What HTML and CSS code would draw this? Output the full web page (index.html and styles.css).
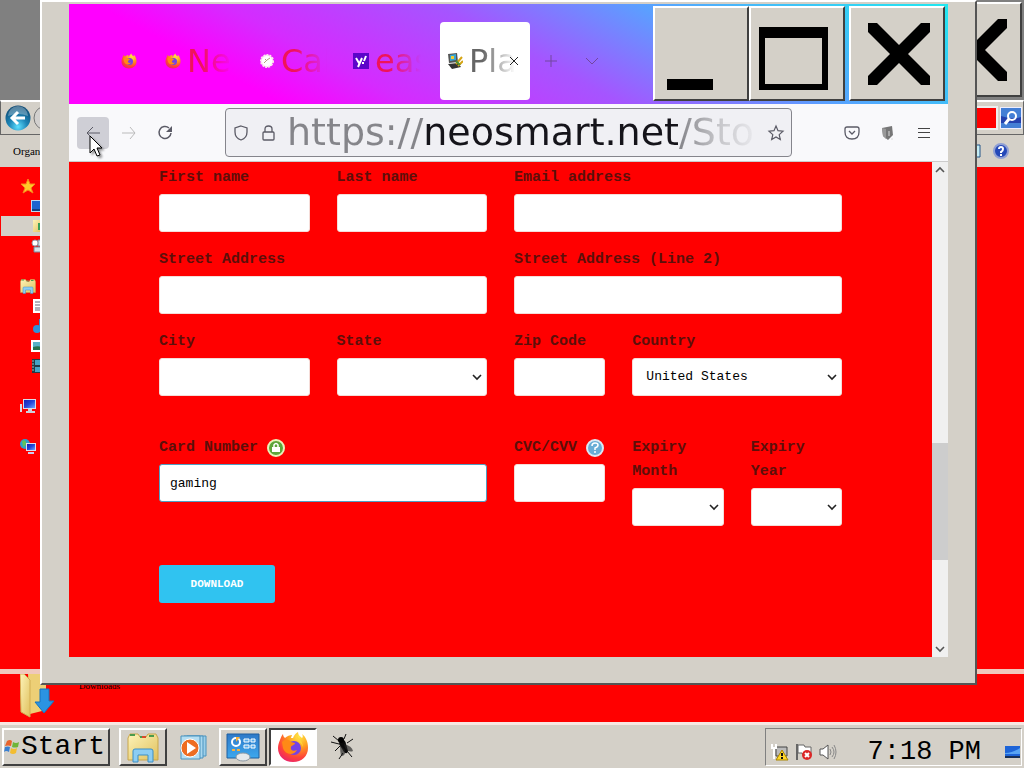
FILE: index.html
```html
<!DOCTYPE html>
<html lang="en">
<head>
<meta charset="utf-8">
<title>Desktop</title>
<link rel="stylesheet" href="styles.css">
</head>
<body>
<svg class="defs" aria-hidden="true">
  <defs>
    <radialGradient id="fireball" cx=".7" cy=".15" r="1"><stop offset="0" stop-color="#ffe94a"/><stop offset=".35" stop-color="#ffa11f"/><stop offset=".7" stop-color="#ff4438"/><stop offset="1" stop-color="#e3197c"/></radialGradient>
    <radialGradient id="orb" cx=".5" cy=".85" r=".9"><stop offset="0" stop-color="#5fe0ff"/><stop offset=".4" stop-color="#1d86b8"/><stop offset="1" stop-color="#0c3f66"/></radialGradient>
    <linearGradient id="paper" x1="0" y1="0" x2="1" y2="1"><stop offset="0" stop-color="#fdf3b8"/><stop offset="1" stop-color="#e0c15e"/></linearGradient>
    <linearGradient id="screen" x1="0" y1="0" x2="1" y2="1"><stop offset="0" stop-color="#1a1fb0"/><stop offset=".5" stop-color="#2446d8"/><stop offset="1" stop-color="#6fa4ff"/></linearGradient>
    <linearGradient id="sky" x1="0" y1="0" x2="0" y2="1"><stop offset="0" stop-color="#2f79c8"/><stop offset="1" stop-color="#3da8ee"/></linearGradient>
    <symbol id="firefox" viewBox="0 0 32 32">
      <path fill="url(#fireball)" d="M3 9c1-3 2-5 3-6 0 2 1 3 2 4 2-2 5-3 7-3 0 1-1 2-1 3h2c1-3 3-5 5-6 0 3 2 4 4 6 1-1 1-2 0-4 4 3 6 8 6 14 0 8-6 14-15 14S1 25 1 17c0-3 1-6 2-8z"/>
      <circle cx="17" cy="17" r="7" fill="#7542e5"/>
      <path fill="#ff8a16" d="M5 11c3-3 7-3 9 0l4 1c0 2-3 2-4 4-1 3 2 5 6 3-3 6-12 5-14-2z"/>
      <path fill="#ffd43b" d="M20 4c1 4 6 6 6 12-1-3-3-5-5-6 0-2-2-3-1-6z"/>
    </symbol>
    <symbol id="cross" viewBox="0 0 62 62"><path d="M0 0h9l22 22L53 0h9v9L40 31l22 22v9h-9L31 40 9 62H0v-9l22-22L0 9z"/></symbol>
    <symbol id="down" viewBox="0 0 10 10"><path d="M1 3l4 4 4-4" fill="none" stroke="#222" stroke-width="1.600"/></symbol>
    <symbol id="library" viewBox="0 0 32 32">
      <path d="M1 7l2-4h8l2 3h6l2-3h8l2 4v22H1z" fill="url(#paper)" stroke="#c9a64a"/>
      <path d="M3 4h5M13 6h5M22 5h5" stroke="#4a9b4d" stroke-width="2"/><path d="M15 6h4" stroke="#d84b2b" stroke-width="2"/>
      <path d="M6 31V20q0-2 2-2h16q2 0 2 2v11h-5v-7H11v7z" fill="#8ccdf2" stroke="#3d8fc5"/>
    </symbol>
    <symbol id="monitor" viewBox="0 0 16 16"><path d="M3 1h13v10H3z" fill="#d9dce8"/><path d="M4 2h11v8H4z" fill="url(#screen)"/><path d="M8 11h4v2h3v2H6v-2h2z" fill="#cdd2dc"/></symbol>
  </defs>
</svg>

<div class="desktop">
  <section class="explorer" aria-label="Explorer">
    <header class="explorer-title">
      <button class="caption-btn" aria-label="Close folder"><svg class="cross"><use href="#cross"/></svg></button>
    </header>
    <div class="explorer-nav">
      <button class="orb-btn" aria-label="Back"><svg width="26" height="26" viewBox="0 0 26 26"><circle cx="13" cy="13" r="12.500" fill="url(#orb)"/><path d="M3 11a10 10 0 0 1 20 0q-10-4-20 0z" fill="#fff" opacity=".3"/><path d="M20 13H7m6-6l-6 6 6 6" fill="none" stroke="#fff" stroke-width="3"/></svg></button>
      <button class="orb-btn" aria-label="Forward"><svg width="26" height="26" viewBox="0 0 26 26"><circle cx="13" cy="13" r="12" fill="#d2d0ce" stroke="#777"/></svg></button>
      <input class="explorer-search" type="text" aria-label="Search folder">
      <button class="search-btn" aria-label="Search"><svg width="20" height="20" viewBox="0 0 20 20"><path fill="#447fd5" d="M0 0h20v20H0z"/><path fill="#2440ad" d="M0 8q12 4 20 1v6H0z"/><circle cx="11" cy="8" r="4" fill="none" stroke="#fff" stroke-width="2"/><path d="M8 11l-4 5" stroke="#fff" stroke-width="3"/></svg></button>
    </div>
    <div class="explorer-tools">
      <button class="plain organize">Organize</button>
      <span class="tool-end">
        <svg width="14" height="14" viewBox="0 0 14 14"><path d="M1 1h12v12H1z" fill="#c5edf4" stroke="#258"/></svg>
        <svg width="16" height="16" viewBox="0 0 16 16"><circle cx="8" cy="8" r="7" fill="#2448b8" stroke="#8f9fd4" stroke-width="2"/><path d="M6 6q0-2 2-2t2 2-2 3v1m0 1v2" fill="none" stroke="#fff" stroke-width="2"/></svg>
      </span>
    </div>
    <div class="explorer-body">
      <ul class="tree">
        <li class="root"><svg width="16" height="16" viewBox="0 0 16 16"><path d="M8 1l2 5h5l-4 4 2 5-5-3-5 3 2-5-4-4h5z" fill="#ffc928" stroke="#f7861b"/></svg></li>
        <li><svg width="16" height="16" viewBox="0 0 16 16"><path d="M0 2h16v12H0z" fill="#bcd8f2"/><path d="M1 3h14v8H1z" fill="#1d64cf"/><path d="M1 11h14v2H1z" fill="#124080"/></svg></li>
        <li class="picked"><svg width="16" height="16" viewBox="0 0 16 16"><path d="M2 2h9v12H2z" fill="url(#paper)"/><path d="M7 5h8v7H7z" fill="#38a05a"/></svg></li>
        <li><svg width="16" height="16" viewBox="0 0 16 16"><path d="M7 2h9v6H7zM3 9h12v5H3z" fill="#d5e1e8" stroke="#789"/><circle cx="4" cy="5" r="3" fill="#fff" stroke="#99a"/></svg></li>
      </ul>
      <ul class="tree">
        <li class="root"><svg width="16" height="16"><use href="#library"/></svg></li>
        <li><svg width="16" height="16" viewBox="0 0 16 16"><path d="M2 1h13v14H2z" fill="#fff"/><path d="M4 4h8M4 7h8M4 10h8M4 12h8" stroke="#667"/></svg></li>
        <li><svg width="16" height="16" viewBox="0 0 16 16"><circle cx="6" cy="11" r="4" fill="#2d91d8"/><path d="M9 11V1" stroke="#2d91d8" stroke-width="2"/></svg></li>
        <li><svg width="16" height="16" viewBox="0 0 16 16"><path d="M0 2h16v12H0z" fill="#fff"/><path d="M2 4h12v8H2z" fill="#59b3c7"/><path d="M2 9q6-2 12 1v2H2z" fill="#26734d"/></svg></li>
        <li><svg width="16" height="16" viewBox="0 0 16 16"><path d="M1 1h15v14H1z" fill="#223a46"/><path d="M4 2h11v5H4zM4 9h11v5H4z" fill="#43a3c7"/><path d="M2 2v12" stroke="#9bb" stroke-dasharray="2 1"/></svg></li>
      </ul>
      <ul class="tree"><li class="root"><svg width="16" height="16"><use href="#monitor"/><path d="M1 6v8" stroke="#d9dce8" stroke-width="2"/></svg></li></ul>
      <ul class="tree"><li class="root"><svg width="16" height="16" viewBox="0 0 16 16"><circle cx="5" cy="6" r="5" fill="#2b9fd0"/><path d="M2 3q3-2 4 1T3 9z" fill="#63c25a"/><path d="M6 5h10v8H6z" fill="#dde"/><path d="M7 6h8v6H7z" fill="url(#screen)"/><path d="M8 15h6" stroke="#cce" stroke-width="2"/></svg></li></ul>
    </div>
    <footer class="details">
      <svg width="36" height="44" viewBox="0 0 36 44"><path d="M8 0h18v36l-16 4z" fill="#edcf76"/><path d="M0 0h4l6 6v37L1 38z" fill="url(#paper)" stroke="#d2ae52"/><path d="M20 15h9v12h5L24 39 15 28h5z" fill="#2b93e2" stroke="#1673bd"/></svg>
      <span>Downloads</span>
    </footer>
  </section>

  <main class="browser">
    <header class="titlebar">
      <nav class="tabs" aria-label="Tabs">
        <button class="tab pinned" aria-label="Pinned tab"><svg width="16" height="16"><use href="#firefox"/></svg></button>
        <button class="tab"><svg width="16" height="16"><use href="#firefox"/></svg><span class="tab-name">Ne</span></button>
        <button class="tab"><svg width="16" height="16" viewBox="0 0 16 16"><circle cx="8" cy="8" r="6" fill="#fff" stroke="#fce4ec" stroke-width="2" stroke-dasharray="2 1"/><path d="M5 10l3-3 3-2M6 6l2 2" fill="none" stroke="#b2a27d"/></svg><span class="tab-name">Cal</span></button>
        <button class="tab"><svg width="16" height="16" viewBox="0 0 16 16"><path d="M0 0h16v16H0z" fill="#5b05c9"/><path d="M3 5l3 5M9 5l-4 9" stroke="#fff" stroke-width="2"/><path d="M13 3l-2 5m-1 1v2" stroke="#fff" stroke-width="2"/></svg><span class="tab-name">eas</span></button>
        <button class="tab active"><svg width="16" height="16" viewBox="0 0 16 16"><path d="M1 1l9-1 1 9-9 1z" fill="#555"/><path d="M3 2l6-1v6L3 8z" fill="#35a5d5"/><path d="M4 3h3v3H4z" fill="#f3cb35"/><path d="M1 11l10-1 3 4-9 2z" fill="#333"/><path d="M9 11l6-7M11 13l5-5" stroke="#d6a514" stroke-width="2"/><path d="M9 8l4 4" stroke="#4a8f35" stroke-width="2"/></svg><span class="tab-name">Pla</span>
          <svg class="tab-close" width="10" height="10" viewBox="0 0 10 10"><path d="M1 1l8 8M9 1L1 9" stroke="#222"/></svg></button>
      </nav>
      <button class="tab-tool" aria-label="New tab"><svg width="14" height="14" viewBox="0 0 14 14"><path d="M7 1v12M1 7h12" stroke="#73469f"/></svg></button>
      <button class="tab-tool" aria-label="List all tabs"><svg width="14" height="14" viewBox="0 0 14 14"><path d="M1 4l6 6 6-6" fill="none" stroke="#73469f"/></svg></button>
      <div class="captions">
        <button class="caption-btn" aria-label="Minimize"><svg width="76" height="74"><path d="M4 62h46v11H4z"/></svg></button>
        <button class="caption-btn" aria-label="Maximize"><svg width="76" height="74"><path fill-rule="evenodd" d="M0 10h69v63H0zM6 21v46h57V21z"/></svg></button>
        <button class="caption-btn last" aria-label="Close"><svg class="cross"><use href="#cross"/></svg></button>
      </div>
    </header>
    <div class="toolbar">
      <div class="tools">
        <button class="tool pressed" aria-label="Go back"><svg width="16" height="16" viewBox="0 0 16 16"><path d="M15 8H2m6-6L2 8l6 6" fill="none" stroke="#5b5b66"/></svg>
          <svg class="pointer" width="14" height="22" viewBox="0 0 14 22"><path d="M1 1v17l4-4 3 7 3-1-3-7h5z" fill="#fff" stroke="#000"/></svg></button>
        <button class="tool" aria-label="Go forward"><svg width="16" height="16" viewBox="0 0 16 16"><path d="M1 8h13M9 2l5 6-5 6" fill="none" stroke="#bbb"/></svg></button>
        <button class="tool" aria-label="Reload"><svg width="16" height="16" viewBox="0 0 16 16"><path d="M12 3a6 6 0 1 0 2 5" fill="none" stroke="#5b5b66" stroke-width="1.500"/><path d="M15 1v6H9z" fill="#5b5b66"/></svg></button>
      </div>
      <div class="urlbar">
        <svg width="16" height="18" viewBox="0 0 16 18"><path d="M8 2l6 2v4c0 4-3 7-6 8-3-1-6-4-6-8V4z" fill="none" stroke="#5b5b66" stroke-width="1.300"/></svg>
        <svg width="16" height="18" viewBox="0 0 16 18"><rect x="3" y="8" width="11" height="8" rx="1" fill="none" stroke="#5b5b66" stroke-width="1.300"/><path d="M5 8V5q0-3 3.500-3T12 5v3" fill="none" stroke="#5b5b66" stroke-width="1.300"/></svg>
        <input class="url" type="text" aria-label="Address" value="https://neosmart.net/Sto">
        <button class="plain" aria-label="Bookmark"><svg width="18" height="18" viewBox="0 0 18 18"><path d="M9 2l2 4.700 5 .5-3.800 3.400 1.100 5L9 13l-4.300 2.600 1.100-5L2 7.200l5-.5z" fill="none" stroke="#5b5b66" stroke-width="1.200"/></svg></button>
      </div>
      <div class="tools">
        <button class="tool" aria-label="Save to Pocket"><svg width="16" height="16" viewBox="0 0 16 16"><path d="M3 2h10q2 0 2 2v3q0 7-7 7T1 7V4q0-2 2-2z" fill="none" stroke="#5b5b66" stroke-width="1.300"/><path d="M5 6l3 3 3-3" fill="none" stroke="#5b5b66" stroke-width="1.300"/></svg></button>
        <button class="tool" aria-label="Extension"><svg width="16" height="16" viewBox="0 0 16 16"><path d="M2 3l10-2 1 9-5 5-5-4z" fill="#777"/><path d="M2 3l4 1v10l-3-3z" fill="#999"/><path d="M9 6v5M11 14h2" stroke="#ddd"/></svg></button>
        <button class="tool" aria-label="Menu"><svg width="16" height="16" viewBox="0 0 16 16"><path d="M2 3.500h12M2 7.500h12M2 12.500h12" stroke="#444"/></svg></button>
      </div>
    </div>

    <div class="page">
      <form class="order">
        <div class="field w3"><label for="first">First name</label><input id="first" type="text"></div>
        <div class="field w3"><label for="last">Last name</label><input id="last" type="text"></div>
        <div class="field w6"><label for="email">Email address</label><input id="email" type="text"></div>
        <div class="field w6"><label for="street">Street Address</label><input id="street" type="text"></div>
        <div class="field w6"><label for="street2">Street Address (Line 2)</label><input id="street2" type="text"></div>
        <div class="field w3"><label for="city">City</label><input id="city" type="text"></div>
        <div class="field w3"><label for="state">State</label><div class="pick"><select id="state"><option></option></select><svg><use href="#down"/></svg></div></div>
        <div class="field w2"><label for="zip">Zip Code</label><input id="zip" type="text"></div>
        <div class="field w4"><label for="country">Country</label><div class="pick"><select id="country"><option>United States</option></select><svg><use href="#down"/></svg></div></div>
        <div class="field w6 pay"><label for="card">Card Number <svg width="18" height="18" viewBox="0 0 18 18"><circle cx="9" cy="9" r="8" fill="#5da53a" stroke="#e9f2b8" stroke-width="2"/><path d="M5 8h8v5H5z" fill="#fff"/><path d="M7 8V6q2-3 4 0v2" fill="none" stroke="#fff" stroke-width="1.500"/></svg></label><input id="card" class="focused" type="text" value="gaming"></div>
        <div class="field w2 pay"><label for="cvc">CVC/CVV <svg width="18" height="18" viewBox="0 0 18 18"><circle cx="9" cy="9" r="8" fill="#69add6" stroke="#dce9f3" stroke-width="2"/><path d="M6 7q0-3 3-3t3 2q0 2-3 3v2m0 1v2" fill="none" stroke="#fff" stroke-width="1.500"/></svg></label><input id="cvc" type="text"></div>
        <div class="field w2 pay"><label for="month">Expiry<br>Month</label><div class="pick"><select id="month"><option></option></select><svg><use href="#down"/></svg></div></div>
        <div class="field w2 pay"><label for="year">Expiry<br>Year</label><div class="pick"><select id="year"><option></option></select><svg><use href="#down"/></svg></div></div>
        <button class="download" type="button">DOWNLOAD</button>
      </form>
      <div class="scrollbar">
        <svg width="10" height="16" viewBox="0 0 10 16"><path d="M1 10l4-4 4 4" fill="none" stroke="#555" stroke-width="1.600"/></svg>
        <div class="track"><div class="thumb"></div></div>
        <svg width="10" height="16" viewBox="0 0 10 16"><path d="M1 6l4 4 4-4" fill="none" stroke="#555" stroke-width="1.600"/></svg>
      </div>
    </div>
  </main>
</div>

<footer class="taskbar">
  <button class="start"><svg width="16" height="16" viewBox="0 0 16 16"><path d="M3 2q3-2 5 0L7 7Q4 6 1 7z" fill="#e8632c"/><path d="M9 3q3 2 6 0l-1 5q-3 1-6 0z" fill="#6fb53a"/><path d="M1 8q3-1 5 0l-1 5q-3-2-5 0z" fill="#3a7fd0"/><path d="M7 9q3 2 6 0l-1 5q-3 2-6 0z" fill="#f3bd30"/></svg>Start</button>
  <div class="apps">
    <button class="app open" aria-label="Explorer"><svg width="34" height="32"><use href="#library"/></svg></button>
    <button class="app" aria-label="Media Player"><svg width="28" height="28" viewBox="0 0 28 28"><path d="M8 3h19v20H8z" fill="#9ccfe9" stroke="#4b93be"/><path d="M5 3h19v22H5z" fill="#a9d8ef" stroke="#4b93be"/><path d="M2 3h19v23H2z" fill="#b5def2" stroke="#4b93be"/><circle cx="11" cy="15" r="9" fill="#ee6d22" stroke="#fff"/><path d="M8 9l9 6-9 6z" fill="#fff"/></svg></button>
    <button class="app open" aria-label="Control Panel"><svg width="34" height="30" viewBox="0 0 34 30"><path d="M1 2h32v24H1z" fill="url(#sky)" stroke="#1f5e9f"/><circle cx="10" cy="10" r="4" fill="none" stroke="#fff" stroke-width="2"/><path d="M10 10V5h4z" fill="#f7b13c"/><path d="M18 7h5v3h-5zM25 7h4v3h-4zM18 13h5v3h-5zM25 13h4v3h-4z" fill="#54a8e8" stroke="#fff"/><path d="M6 18h8" stroke="#f7b13c" stroke-width="2" stroke-dasharray="3 2"/><ellipse cx="17" cy="25" rx="7" ry="4" fill="#e6e9ec" stroke="#8d99a3"/></svg></button>
    <button class="app current" aria-label="Firefox"><svg width="32" height="32"><use href="#firefox"/></svg></button>
    <button class="app" aria-label="Fly"><svg width="26" height="28" viewBox="0 0 26 28"><path d="M10 7q5-2 6 4l2 7q-1 4-4 1l-5-8z" fill="#080808"/><path d="M14 11q8 2 9 7-4 2-8-3zM10 12q0 7 1 11 5 0 4-6z" fill="#222" opacity=".65"/><path d="M9 8L3 3M9 11L1 9M10 13l-5 5M14 6l2-5M17 10l6-4M17 18l5 6M13 20l-4 6" fill="none" stroke="#111"/><circle cx="11" cy="7" r="3"/></svg></button>
  </div>
  <div class="tray">
    <div class="tray-icons">
      <svg width="18" height="18" viewBox="0 0 18 18"><path d="M5 4h11v9H5z" fill="#bbb" stroke="#444"/><path d="M1 1v4h4V1M3 5v11" fill="none" stroke="#fff" stroke-width="2"/><path d="M11 7l6 10H5z" fill="#ffd629" stroke="#a98500"/><path d="M11 10v3m0 1v2" stroke="#111" stroke-width="2"/></svg>
      <svg width="18" height="18" viewBox="0 0 18 18"><path d="M2 1v16" stroke="#666" stroke-width="2"/><path d="M3 2h6l1 2h6v8H8l-1-2H3z" fill="#fff" stroke="#666"/><circle cx="12" cy="12" r="5" fill="#dc2626"/><path d="M10 10l4 4m0-4l-4 4" stroke="#fff" stroke-width="2"/></svg>
      <svg width="18" height="18" viewBox="0 0 18 18"><path d="M1 6h3l5-4v14l-5-4H1z" fill="#fff" stroke="#555"/><path d="M11 6q2 3 0 6M13 4q4 5 0 10M15 2q4 7 0 14" fill="none" stroke="#888"/></svg>
    </div>
    <time>7:18 PM</time>
    <button class="plain" aria-label="Show desktop"><svg width="16" height="16" viewBox="0 0 16 16"><path d="M0 2h15v11H0z" fill="#1d64d8"/><path d="M0 9q8 0 15-5v6H0z" fill="#58a4f4"/><path d="M0 12h15v2H0z" fill="#183058"/></svg></button>
  </div>
</footer>
</body>
</html>
```
FILE: styles.css
```css
* { box-sizing: border-box; }
body {
  margin: 0;
  height: 100vh;
  display: flex;
  flex-direction: column;
  overflow: hidden;
  background: #808080;
  font-family: "Liberation Mono", monospace;
  color: #000;
}
button { font: inherit; padding: 0; border: 0; background: none; color: inherit; }
svg { display: block; flex: none; }
ul { list-style: none; margin: 0; padding: 0; }
.defs { position: absolute; width: 0; height: 0; }
.plain { display: flex; align-items: center; }

.desktop { position: relative; flex: 1; min-height: 0; }

/* window caption buttons */
.caption-btn {
  width: 96px;
  height: 95px;
  display: grid;
  place-items: center;
  background: #d4d0c8;
  border: 2px solid;
  border-color: #fff #404040 #404040 #fff;
}
.caption-btn .cross { width: 62px; height: 62px; margin-left: 4px; }

/* folder window */
.explorer { height: 100%; display: flex; flex-direction: column; background: #f00; }
.explorer-title {
  height: 100px;
  padding: 2px;
  display: flex;
  justify-content: flex-end;
  background: #808080;
}
.explorer-nav {
  height: 35px;
  padding: 4px 1px 4px 4px;
  display: flex;
  align-items: center;
  gap: 2px;
  background: #d4d0c8;
  border: 1px solid #666;
  border-top: 2px solid #fff;
}
.orb-btn { width: 26px; height: 26px; }
.explorer-search { flex: 1; height: 24px; background: #f00; border: 2px solid #eee; }
.search-btn { padding: 1px; background: #eef; }
.explorer-tools {
  height: 32px;
  padding: 0 15px 0 13px;
  display: flex;
  align-items: center;
  justify-content: space-between;
  background: #d4d0c8;
}
.organize { font-family: "Liberation Serif", serif; font-size: 11px; }
.tool-end { display: flex; align-items: center; gap: 12px; }
.explorer-body { flex: 1; padding-top: 9px; display: flex; flex-direction: column; gap: 20px; }
.tree { width: 160px; }
.tree li { height: 20px; padding-left: 30px; margin-left: 1px; display: flex; align-items: center; }
.tree .root { padding-left: 19px; }
.tree .picked { background: #d4d0c8; }
.details {
  height: 53px;
  padding-left: 20px;
  display: flex;
  align-items: flex-start;
  gap: 23px;
  border-top: 5px solid #f0c8bc;
  font: 9px/24px "Liberation Serif", serif;
}

/* browser window */
.browser {
  position: absolute;
  inset: 0 47px 37px 40px;
  padding: 2px 27px 26px;
  display: flex;
  flex-direction: column;
  background: #d4d0c8;
  border: 2px solid;
  border-color: #fff #555 #555 #fff;
}
.titlebar {
  height: 100px;
  display: flex;
  align-items: center;
  padding: 0 3px 0 48px;
  background: linear-gradient(28deg, #f0f 20%, #d52bff 32%, #a555ff 52%, #5aa0ff 71%, #20e8f0 100%);
}
.tabs { display: flex; align-items: center; gap: 4px; padding-top: 14px; }
.tab {
  position: relative;
  width: 90px;
  height: 78px;
  padding: 0 7px;
  display: flex;
  align-items: center;
  gap: 6px;
  border-radius: 4px;
  font: 32px/40px "DejaVu Sans", sans-serif;
  color: #f0135a;
}
.tab.pinned { width: 37px; padding: 0 4px; }
.tab.active { background: #fff; color: #666; }
.tab-name {
  flex: 1;
  min-width: 0;
  overflow: hidden;
  text-align: left;
  mask-image: linear-gradient(to right, #000 25%, transparent 85%);
}
.tab-close { position: absolute; right: 11px; top: 34px; }
.tab-tool { width: 41px; height: 78px; margin-top: 14px; display: grid; place-items: center; }
.captions { margin-left: auto; padding-top: 2px; align-self: flex-start; display: flex; }
.captions .last { margin-left: 4px; }

.toolbar {
  height: 58px;
  padding: 0 8px;
  display: flex;
  align-items: center;
  gap: 44px;
  background: #f9f9fb;
  border-bottom: 1px solid #ccc;
}
.tools { display: flex; gap: 4px; }
.tool { position: relative; width: 32px; height: 32px; display: grid; place-items: center; border-radius: 4px; }
.pressed { background: #cfcfd6; }
.pointer { position: absolute; left: 12px; top: 18px; filter: drop-shadow(2px 2px 1px #0006); }
.urlbar {
  flex: 1;
  min-width: 0;
  height: 49px;
  padding: 0 6px 0 7px;
  display: flex;
  align-items: center;
  gap: 11px;
  background: #f0f0f4;
  border: 1px solid #85858c;
  border-radius: 4px;
}
.url {
  flex: 1;
  min-width: 0;
  height: 47px;
  padding: 0;
  border: 0;
  font: 38px/47px "DejaVu Sans", sans-serif;
  color: transparent;
  background: linear-gradient(to right, #85858a 137px, #15141a 137px 392px, #85858a 392px, #c4c4c8 430px, #f0f0f4 475px);
  background-clip: text;
}

/* order page */
.page { flex: 1; min-height: 0; display: flex; background: #f00; }
.order {
  flex: 1;
  padding: 4px 90px 0;
  display: grid;
  grid-template-columns: repeat(12, minmax(0, 1fr));
  align-content: start;
  gap: 16px 27px;
  overflow: hidden;
}
.field { display: flex; flex-direction: column; gap: 4px; }
.w2 { grid-column: span 2; }
.w3 { grid-column: span 3; }
.w4 { grid-column: span 4; }
.w6 { grid-column: span 6; }
.pay { padding-top: 24px; }
.field label {
  display: flex;
  align-items: center;
  gap: 9px;
  font-size: 15px;
  font-weight: bold;
  line-height: 24px;
  white-space: nowrap;
  color: #5c0f0a;
}
.field input, .field select {
  width: 100%;
  height: 38px;
  padding: 0 10px;
  background: #fff;
  border: 1px solid #f5dcd8;
  border-radius: 3px;
  font: 13px/20px "Liberation Mono", monospace;
  color: #000;
}
.field .focused { border-color: #4f9fc4; }
.pick { display: grid; align-items: center; }
.pick > * { grid-area: 1 / 1; }
.pick select { appearance: none; padding-left: 13px; }
.pick svg { width: 10px; height: 10px; justify-self: end; margin-right: 5px; pointer-events: none; }
.download {
  grid-column: 1 / -1;
  justify-self: start;
  width: 116px;
  height: 38px;
  margin-top: 23px;
  border-radius: 3px;
  background: #30c3f0;
  color: #fff;
  font-size: 11px;
  font-weight: bold;
}
.scrollbar {
  width: 16px;
  display: flex;
  flex-direction: column;
  align-items: center;
  background: #f0f0f0;
}
.track { flex: 1; width: 100%; display: grid; grid-template-rows: 265fr 117fr 81fr; }
.thumb { grid-row: 2; background: #cdcdcd; }

/* taskbar */
.taskbar {
  height: 46px;
  padding: 3px 2px 2px;
  display: flex;
  align-items: stretch;
  background: #d4d0c8;
  border-top: 3px solid #f7e6e2;
}
.start, .open {
  border: 2px solid;
  border-color: #fff #404040 #404040 #fff;
}
.start { width: 108px; display: flex; align-items: center; gap: 1px; font-size: 28px; line-height: 32px; }
.apps { display: flex; gap: 2px; margin-left: 9px; }
.app { width: 48px; display: grid; place-items: center; }
.current { background: #fff; border: 2px solid; border-color: #404040 #fff #fff #404040; }
.tray {
  margin-left: auto;
  padding: 10px 0 0 5px;
  display: flex;
  align-items: center;
  border: 1px solid;
  border-color: #808080 #fff #fff #808080;
}
.tray-icons { display: flex; gap: 6px; }
.tray time { margin: 0 24px 0 31px; font-size: 27px; line-height: 26px; }
```
